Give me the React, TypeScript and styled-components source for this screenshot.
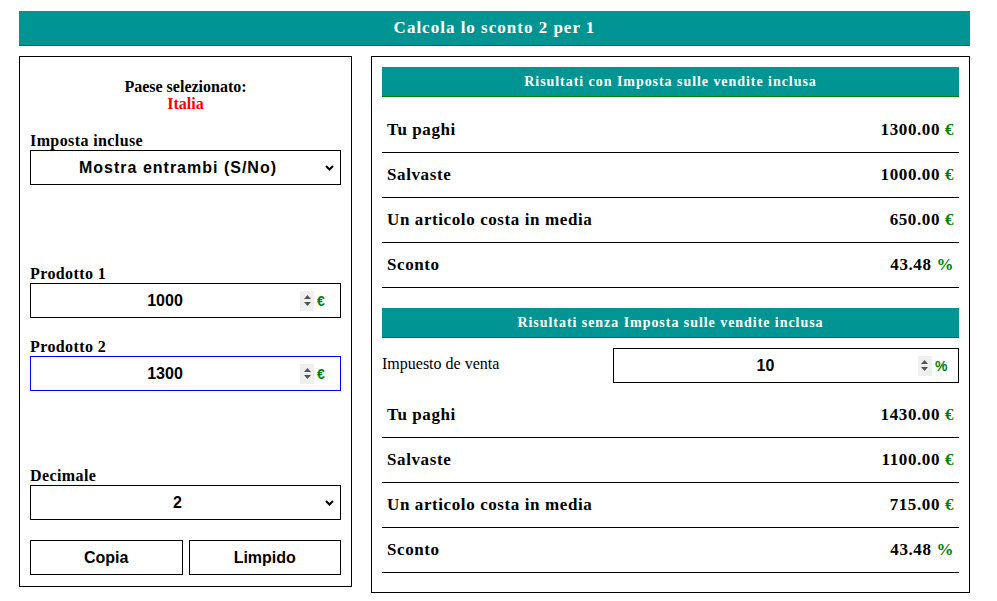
import styled, { createGlobalStyle } from 'styled-components';

const GlobalStyle = createGlobalStyle`
  body {
    margin: 0;
    background: #ffffff;
    font-family: "Liberation Serif", "Times New Roman", serif;
    color: #000000;
  }
`;

const teal = '#009592';
const green = '#008000';

interface IRow {
  label: string;
  value: string;
  unit: string;
}

const withTax: IRow[] = [
  { label: 'Tu paghi', value: '1300.00', unit: '€' },
  { label: 'Salvaste', value: '1000.00', unit: '€' },
  { label: 'Un articolo costa in media', value: '650.00', unit: '€' },
  { label: 'Sconto', value: '43.48', unit: '%' },
];

const withoutTax: IRow[] = [
  { label: 'Tu paghi', value: '1430.00', unit: '€' },
  { label: 'Salvaste', value: '1100.00', unit: '€' },
  { label: 'Un articolo costa in media', value: '715.00', unit: '€' },
  { label: 'Sconto', value: '43.48', unit: '%' },
];

const Spinner = () => (
  <SpinBox>
    <svg width="9" height="15" viewBox="0 0 9 15">
      <path d="M1 6 L4.5 2 L8 6 Z" fill="#555" />
      <path d="M1 9 L4.5 13 L8 9 Z" fill="#555" />
    </svg>
  </SpinBox>
);

const Chevron = () => (
  <ChevronBox>
    <svg width="9" height="6" viewBox="0 0 9 6">
      <path d="M1 1 L4.5 4.5 L8 1" stroke="#000" strokeWidth="2" fill="none" />
    </svg>
  </ChevronBox>
);

function NumberField(props: { value: string; unit: string; focused?: boolean }) {
  return (
    <FieldBox $focused={props.focused} $pad={5}>
      <NumInput type="text" defaultValue={props.value} />
      <Spinner />
      <FieldUnit>{props.unit}</FieldUnit>
    </FieldBox>
  );
}

function SelectField(props: { options: string[] }) {
  return (
    <FieldBox $pad={6}>
      <Select defaultValue={props.options[0]}>
        {props.options.map((o) => (
          <option key={o}>{o}</option>
        ))}
      </Select>
      <Chevron />
    </FieldBox>
  );
}

function ResultRows(props: { rows: IRow[] }) {
  return (
    <>
      {props.rows.map((r) => (
        <Row key={r.label}>
          <span>{r.label}</span>
          <span>
            {r.value} <RowUnit>{r.unit}</RowUnit>
          </span>
        </Row>
      ))}
    </>
  );
}

const App = () => {
  return (
    <>
      <GlobalStyle />
      <Page>
        <Title>Calcola lo sconto 2 per 1</Title>
        <Columns>
          <LeftPanel>
            <Country>
              Paese selezionato:
              <br />
              <CountryName>Italia</CountryName>
            </Country>
            <Label $top={20}>Imposta incluse</Label>
            <SelectField options={['Mostra entrambi (S/No)', 'Si', 'No']} />
            <Label $top={80}>Prodotto 1</Label>
            <NumberField value="1000" unit="€" />
            <Label $top={20}>Prodotto 2</Label>
            <NumberField value="1300" unit="€" focused />
            <Label $top={76}>Decimale</Label>
            <SelectField options={['2', '0', '1', '3']} />
            <Buttons>
              <Button>Copia</Button>
              <Button>Limpido</Button>
            </Buttons>
          </LeftPanel>
          <RightPanel>
            <SectionHeader>Risultati con Imposta sulle vendite inclusa</SectionHeader>
            <RowList $top={11}>
              <ResultRows rows={withTax} />
            </RowList>
            <SectionHeader $top={20}>Risultati senza Imposta sulle vendite inclusa</SectionHeader>
            <TaxRow>
              <TaxLabel>Impuesto de venta</TaxLabel>
              <NumberField value="10" unit="%" />
            </TaxRow>
            <RowList $top={10}>
              <ResultRows rows={withoutTax} />
            </RowList>
          </RightPanel>
        </Columns>
      </Page>
    </>
  );
};

export default App;

const Page = styled.div`
  padding: 11px 27px 0 19px;
`;

const Title = styled.div`
  height: 34px;
  background-color: ${teal};
  border-bottom: 1px solid ${green};
  color: #ffffff;
  font-weight: bold;
  font-size: 17px;
  letter-spacing: 1px;
  display: flex;
  align-items: center;
  justify-content: center;
`;

const Columns = styled.div`
  display: flex;
  align-items: flex-start;
  gap: 19px;
  margin-top: 10px;
`;

const LeftPanel = styled.div`
  width: 333px;
  box-sizing: border-box;
  border: 1px solid #000;
  padding: 21px 10px 11px 10px;
  display: flex;
  flex-direction: column;
`;

const Country = styled.div`
  text-align: center;
  font-weight: bold;
  font-size: 16px;
  line-height: 17px;
`;

const CountryName = styled.span`
  color: #ff0000;
`;

const Label = styled.div<{ $top: number }>`
  margin-top: ${(p) => p.$top}px;
  font-weight: bold;
  font-size: 16px;
  letter-spacing: 0.4px;
  line-height: 18px;
`;

const FieldBox = styled.div<{ $focused?: boolean; $pad: number }>`
  height: 35px;
  box-sizing: border-box;
  border: 1px solid ${(p) => (p.$focused ? '#0000ff' : '#000')};
  display: flex;
  align-items: center;
  padding-right: ${(p) => p.$pad}px;
  background: #fff;
`;

const NumInput = styled.input`
  flex: 1;
  min-width: 0;
  border: none;
  outline: none;
  background: transparent;
  text-align: center;
  font-family: "Liberation Sans", Arial, sans-serif;
  font-weight: bold;
  font-size: 16px;
  padding: 0;
`;

const SpinBox = styled.span`
  width: 14px;
  height: 20px;
  margin-left: 1px;
  background: #efefef;
  display: flex;
  align-items: center;
  justify-content: center;
`;

const FieldUnit = styled.span`
  width: 18px;
  margin-left: 3px;
  color: ${green};
  font-family: "Liberation Sans", Arial, sans-serif;
  font-weight: bold;
  font-size: 14px;
`;

const Select = styled.select`
  flex: 1;
  min-width: 0;
  height: 100%;
  border: none;
  outline: none;
  background: transparent;
  appearance: none;
  text-align: center;
  text-align-last: center;
  font-family: "Liberation Sans", Arial, sans-serif;
  font-weight: bold;
  font-size: 16px;
  letter-spacing: 1px;
  color: #000;
  padding: 0;
`;

const ChevronBox = styled.span`
  display: flex;
  align-items: center;
`;

const Buttons = styled.div`
  display: grid;
  grid-template-columns: 1fr 1fr;
  gap: 6px;
  margin-top: 20px;
`;

const Button = styled.button`
  height: 35px;
  background: #fff;
  border: 1px solid #000;
  font-family: "Liberation Sans", Arial, sans-serif;
  font-weight: bold;
  font-size: 16px;
  color: #000;
`;

const RightPanel = styled.div`
  flex: 1;
  box-sizing: border-box;
  border: 1px solid #000;
  padding: 10px 10px 19px 10px;
  display: flex;
  flex-direction: column;
`;

const SectionHeader = styled.div<{ $top?: number }>`
  margin-top: ${(p) => p.$top ?? 0}px;
  height: 29px;
  background: ${teal};
  border-bottom: 1px solid ${green};
  color: #fff;
  font-weight: bold;
  font-size: 14px;
  letter-spacing: 0.95px;
  display: flex;
  align-items: center;
  justify-content: center;
`;

const RowList = styled.div<{ $top: number }>`
  margin-top: ${(p) => p.$top}px;
  display: flex;
  flex-direction: column;
`;

const Row = styled.div`
  height: 45px;
  box-sizing: border-box;
  border-bottom: 1px solid #000;
  padding: 0 5px;
  display: flex;
  align-items: center;
  justify-content: space-between;
  font-weight: bold;
  font-size: 17px;
  letter-spacing: 0.6px;
`;

const RowUnit = styled.span`
  color: ${green};
`;

const TaxRow = styled.div`
  margin-top: 10px;
  display: grid;
  grid-template-columns: 40% 60%;
  align-items: center;
`;

const TaxLabel = styled.div`
  font-size: 16px;
  margin-top: -4px;
`;
